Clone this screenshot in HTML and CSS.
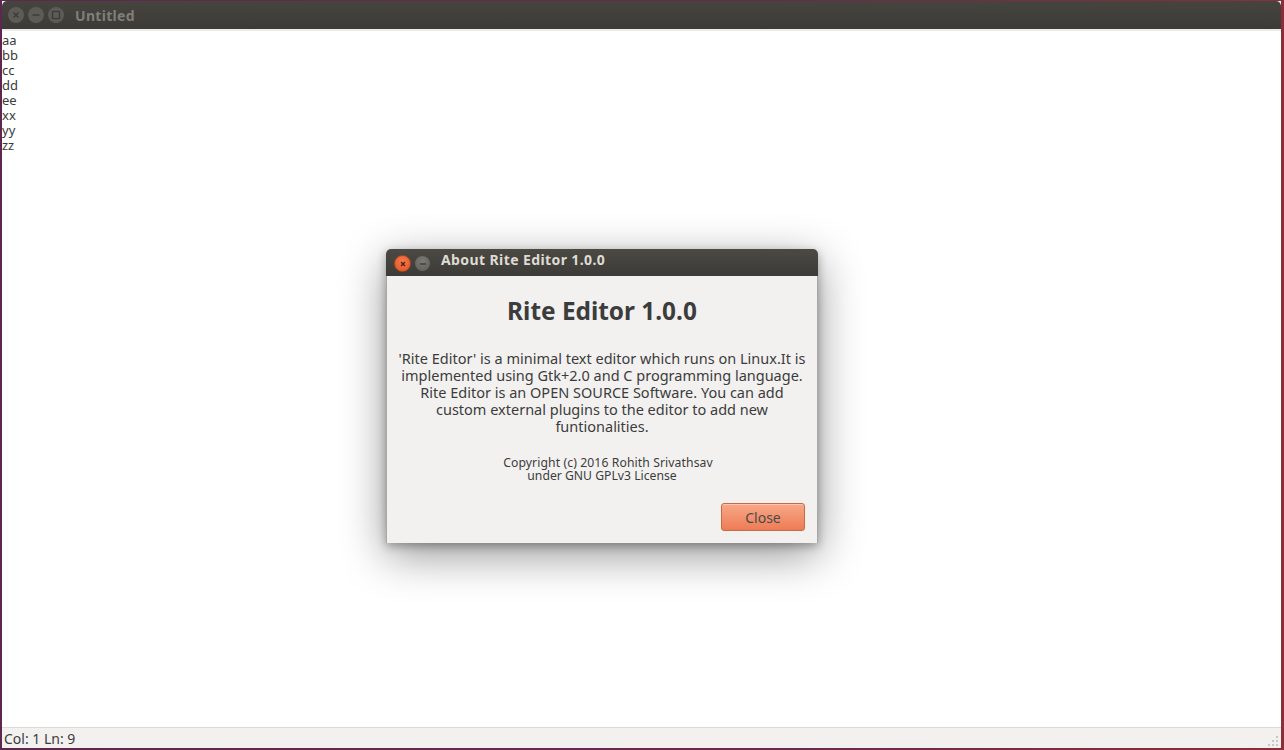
FILE: index.html
```html
<!DOCTYPE html>
<html>
<head>
<meta charset="utf-8">
<link rel="stylesheet" href="styles.css">
</head>
<body>
<div class="window">
  <div class="titlebar">
    <div class="wbtns">
      <span class="wbtn"><svg width="16" height="16" viewBox="0 0 16 16"><path d="M5.5 5.5 L10.5 10.5 M10.5 5.5 L5.5 10.5" stroke="#3c3b37" stroke-width="1.4"/></svg></span>
      <span class="wbtn"><svg width="16" height="16" viewBox="0 0 16 16"><path d="M4.5 8 H11.5" stroke="#3c3b37" stroke-width="1.4"/></svg></span>
      <span class="wbtn"><svg width="16" height="16" viewBox="0 0 16 16"><rect x="4.5" y="4.5" width="7" height="7" fill="none" stroke="#3c3b37" stroke-width="1.3"/></svg></span>
    </div>
    <span class="wtitle">Untitled</span>
  </div>
  <div class="editor">
    <div>aa</div>
    <div>bb</div>
    <div>cc</div>
    <div>dd</div>
    <div>ee</div>
    <div>xx</div>
    <div>yy</div>
    <div>zz</div>
  </div>
  <div class="statusbar">
    <span>Col: 1 Ln: 9</span>
    <svg class="grip" width="12" height="12" viewBox="0 0 12 12"><g fill="#c9c6c1"><rect x="9" y="1" width="2" height="2"/><rect x="5" y="5" width="2" height="2"/><rect x="9" y="5" width="2" height="2"/><rect x="1" y="9" width="2" height="2"/><rect x="5" y="9" width="2" height="2"/><rect x="9" y="9" width="2" height="2"/></g></svg>
  </div>
</div>

<div class="dialog">
  <div class="dtitlebar">
    <span class="dbtn close"><svg width="14" height="14" viewBox="0 0 14 14"><path d="M5 5 L9 9 M9 5 L5 9" stroke="#5a1c0a" stroke-width="1.3"/></svg></span>
    <span class="dbtn min"><svg width="14" height="14" viewBox="0 0 14 14"><path d="M4 7 H10" stroke="#3c3b37" stroke-width="1.3"/></svg></span>
    <span class="dtitle">About Rite Editor 1.0.0</span>
  </div>
  <div class="dbody">
    <h1 class="dhead">Rite Editor 1.0.0</h1>
    <p class="desc">'Rite Editor' is a minimal text editor which runs on Linux.It is<br>implemented using Gtk+2.0 and C programming language.<br>Rite Editor is an OPEN SOURCE Software. You can add<br>custom external plugins to the editor to add new<br>funtionalities.</p>
    <div class="copy">
      <div class="copy-line first">Copyright (c) 2016 Rohith Srivathsav</div>
      <div class="copy-line">under GNU GPLv3 License</div>
    </div>
    <div class="actions"><button class="closebtn">Close</button></div>
  </div>
</div>
</body>
</html>
```
FILE: styles.css
```css
html, body {
  margin: 0;
  padding: 0;
  width: 1284px;
  height: 750px;
  overflow: hidden;
}
body {
  background: linear-gradient(90deg, #5e2750 0%, #6a2a4c 60%, #8a2e3a 100%);
  font-family: "Noto Sans", "Open Sans", sans-serif;
  position: relative;
}
.window {
  position: absolute;
  left: 2px;
  right: 3px;
  top: 1px;
  bottom: 2px;
  display: flex;
  flex-direction: column;
  background: #ffffff;
}
.titlebar {
  height: 28px;
  flex: none;
  background: linear-gradient(#45443f, #3c3b37);
  display: flex;
  align-items: center;
  border-radius: 5px 5px 0 0;
  border-bottom: 2px solid #edece9;
}
.wbtns {
  display: flex;
  gap: 4px;
  margin-left: 6px;
}
.wbtn {
  width: 16px;
  height: 16px;
  border-radius: 50%;
  background: #5c5b56;
  display: flex;
}
.wtitle {
  margin-left: 11px;
  color: #807e78;
  font-weight: 700;
  font-size: 14px;
  letter-spacing: 0.3px;
}
.editor {
  flex: 1;
  padding: 2px 0 0 0;
  font-size: 13px;
  line-height: 15px;
  color: #3a3a3a;
}
.statusbar {
  height: 21px;
  flex: none;
  background: #f2f1f0;
  border-top: 1px solid #dcdad5;
  display: flex;
  align-items: center;
  justify-content: space-between;
  padding: 1px 0 0 2px;
  box-sizing: border-box;
  font-size: 14px;
  color: #3c3c3c;
}
.grip {
  margin-right: 2px;
  align-self: flex-end;
  margin-bottom: 1px;
}
.dialog {
  position: absolute;
  left: 386px;
  top: 249px;
  width: 432px;
  height: 294px;
  display: flex;
  flex-direction: column;
  border-radius: 5px 5px 0 0;
  box-shadow: 0 12px 45px rgba(0,0,0,0.42), 0 3px 10px rgba(0,0,0,0.3);
  overflow: hidden;
}
.dtitlebar {
  height: 27px;
  flex: none;
  background: linear-gradient(#4a4944, #3c3b37);
  display: flex;
  align-items: center;
  padding-left: 8px;
}
.dbtn {
  width: 15px;
  height: 15px;
  border-radius: 50%;
  display: flex;
  align-items: center;
  justify-content: center;
  margin-top: 2px;
}
.dbtn svg { width: 14px; height: 14px; }
.dbtn.close {
  background: radial-gradient(circle at 50% 35%, #f47a4f, #e0531f);
  border: 0.5px solid #b0451c;
}
.dbtn.min {
  background: radial-gradient(circle at 50% 35%, #7b7a75, #5d5c57);
  margin-left: 4px;
}
.dtitle {
  margin-left: 11px;
  color: #dfdbd2;
  font-weight: 700;
  font-size: 14px;
  margin-top: -7px;
  letter-spacing: 0.4px;
}
.dbody {
  flex: 1;
  background: #f2f1f0;
  border-left: 1px solid #a8a7a3;
  border-right: 1px solid #a8a7a3;
  display: flex;
  flex-direction: column;
  align-items: center;
  color: #3c3c3c;
}
.dhead {
  margin: 20px 0 0 0;
  font-size: 24.4px;
  line-height: 30px;
  font-weight: 700;
  color: #3c3c3c;
}
.desc {
  margin: 24px 0 0 0;
  text-align: center;
  font-size: 14.5px;
  line-height: 17px;
}
.copy {
  margin: 21px 0 0 0;
  display: flex;
  flex-direction: column;
  align-items: center;
  font-size: 12.2px;
  line-height: 13px;
}
.copy-line.first {
  padding-left: 12px;
  letter-spacing: 0.1px;
}
.actions {
  align-self: stretch;
  display: flex;
  justify-content: flex-end;
  padding: 21px 12px 0 0;
}
.closebtn {
  width: 84px;
  height: 28px;
  border: 1px solid #c86a46;
  border-radius: 3px;
  background: linear-gradient(#f7a887, #ee7c56);
  color: #4a4a4a;
  font-family: "Noto Sans", "Open Sans", sans-serif;
  font-size: 14px;
  box-shadow: inset 0 1px 0 rgba(255,255,255,0.35);
  padding: 0;
}
```
